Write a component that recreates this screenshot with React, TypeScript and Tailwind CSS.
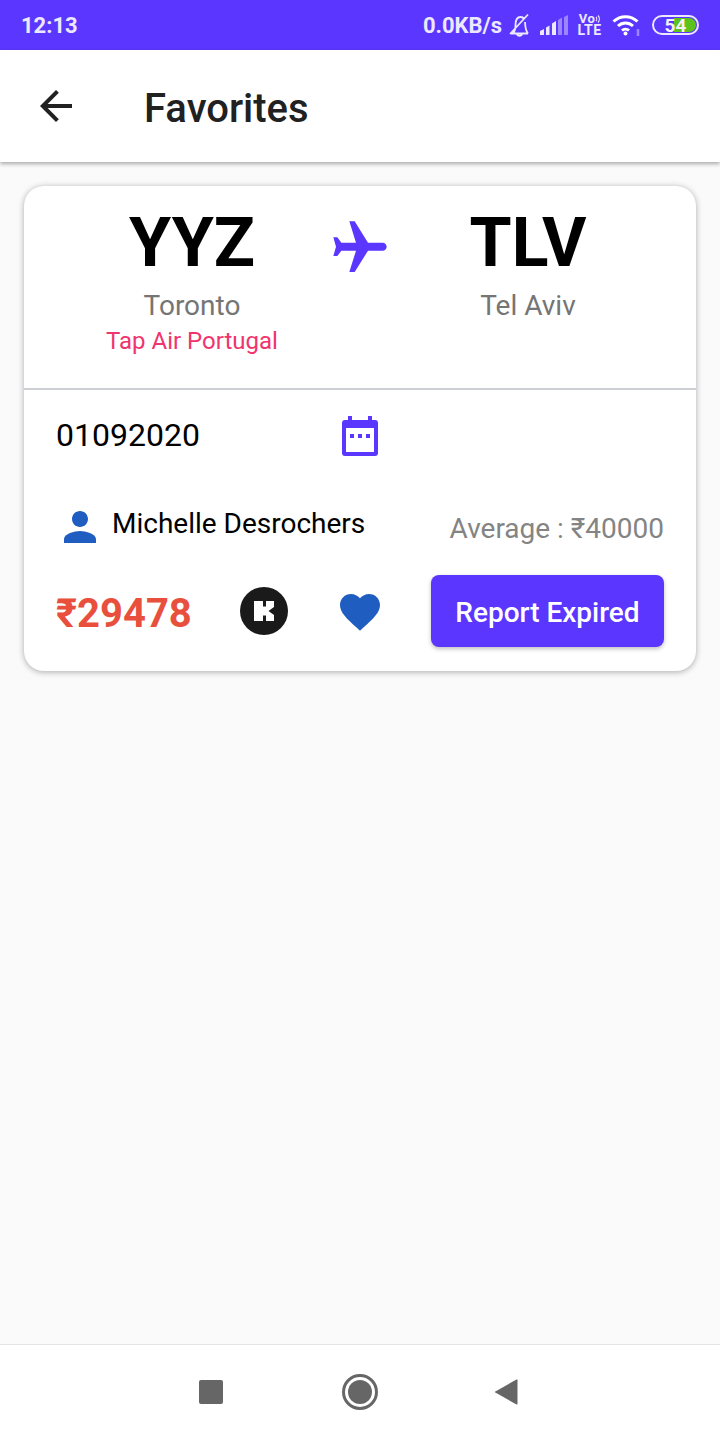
const purple = "#5b36ff";

function StatusBar() {
  return (
    <div className="h-[50px] shrink-0 bg-[#5b36ff] flex items-center pl-[21px] text-[#ece8ff]">
      <span className="text-[22px] font-bold leading-none mt-[2px]">12:13</span>
      <div className="ml-auto flex items-center h-full">
        <span className="text-[22px] font-bold leading-none mt-[2px]">0.0KB/s</span>
        <svg width="24" height="24" viewBox="0 0 24 24" fill="none" stroke="#ece8ff" strokeWidth="1.800" className="ml-[5px]">
          <path d="M4 20.500h17M6 20.500c2.500-2.500 2.500-5 2.500-8.500 0-4.500 1.500-8 5-8 1.800 0 3 .8 3.700 2M18 9c.3 4 .2 8 3 11.500M10 20.500c0 3 5 3 5 0M3 21 21 1.500" />
        </svg>
        <svg width="28" height="20" viewBox="0 0 28 20" className="ml-[9px]">
          <polygon points="0,16 4,14 4,20 0,20" fill="#ece8ff" />
          <polygon points="6,12.500 9.500,10.500 9.500,20 6,20" fill="#ece8ff" />
          <polygon points="12,8.500 16,6 16,20 12,20" fill="#ece8ff" />
          <polygon points="18,5 22,2.500 22,20 18,20" fill="#9c85ff" />
          <polygon points="24,2 28,0 28,20 24,20" fill="#9c85ff" />
        </svg>
        <div className="ml-[10px] w-[23px] flex flex-col items-center font-bold text-[#ece8ff]">
          <div className="flex items-center h-[11px]">
            <span className="text-[13px] leading-none tracking-[0.5px]">Vo</span>
            <svg width="5" height="10" viewBox="0 0 5 10" fill="none" stroke="#ece8ff" strokeWidth="1.200">
              <path d="M1 3c1 1 1 3 0 4M3 1.500c1.800 2 1.800 5 0 7" />
            </svg>
          </div>
          <span className="text-[14px] leading-[13px] tracking-[0.5px]">LTE</span>
        </div>
        <svg width="29" height="22" viewBox="0 0 29 22" fill="none" stroke="#ffffff" strokeWidth="3" className="ml-[11px]">
          <path d="M1.500 7.500c7-6.500 17-6.500 24 0M6 12c4.500-4 10.500-4 15 0M10 16.500c2-1.800 5-1.800 7 0" />
          <circle cx="13.500" cy="19.500" r="2" fill="#ffffff" stroke="none" />
          <path d="M26 15v7" stroke="#9c85ff" strokeWidth="2.500" />
        </svg>
        <div className="relative ml-[11px] mr-[21px] w-[47px] h-[20px] rounded-[10px] border-2 border-[#ece8ff] flex items-center justify-center">
          <div className="absolute right-[1px] top-[1px] bottom-[1px] w-[22px] rounded-r-[8px] bg-[#5cc31c]" />
          <span className="relative text-[19px] font-bold leading-none text-[#f4f1ff]">54</span>
        </div>
      </div>
    </div>
  );
}

function AppBar() {
  return (
    <div className="relative z-10 h-[112px] shrink-0 bg-white flex items-center shadow-[0_2px_4px_rgba(0,0,0,0.32)]">
      <svg width="48" height="48" viewBox="0 0 24 24" fill="#212121" className="ml-[32px] -mt-[1px]">
        <path d="M20 11H7.830l5.590-5.590L12 4l-8 8 8 8 1.410-1.410L7.830 13H20v-2z" />
      </svg>
      <span className="ml-[64px] mt-[6px] text-[40px] font-medium text-[#212121] leading-none">Favorites</span>
    </div>
  );
}

function Card() {
  return (
    <div className="mx-[24px] mt-[24px] h-[485px] bg-white rounded-[20px] shadow-[0_1px_6px_rgba(0,0,0,0.32)] flex flex-col">
      <div className="h-[204px] shrink-0 border-b-2 border-[#ccd0d4] grid grid-cols-[288px_96px_288px]">
        <div className="pl-[48px] flex flex-col items-center pt-[17px]">
          <span className="text-[68px] font-bold leading-[80px] text-black">YYZ</span>
          <span className="text-[28px] leading-[32px] mt-[7px] text-[#757575]">Toronto</span>
          <span className="text-[24px] leading-[28px] mt-[5px] text-[#f0346e]">Tap Air Portugal</span>
        </div>
        <div className="flex justify-center pt-[30px]">
          <svg width="64" height="64" viewBox="0 0 24 24" fill={purple} className="rotate-90">
            <path d="M21 16v-2l-8-5V3.500c0-.830-.670-1.500-1.500-1.500S10 2.670 10 3.500V9l-8 5v2l8-2.500V19l-2 1.500V22l3.500-1 3.500 1v-1.500L13 19v-5.500l8 2.500z" />
          </svg>
        </div>
        <div className="pr-[48px] flex flex-col items-center pt-[17px]">
          <span className="text-[68px] font-bold leading-[80px] text-black">TLV</span>
          <span className="text-[28px] leading-[32px] mt-[7px] text-[#757575]">Tel Aviv</span>
        </div>
      </div>

      <div className="h-[102px] shrink-0 flex items-start pl-[32px]">
        <span className="w-[286px] mt-[29px] text-[32px] leading-none text-black">01092020</span>
        <svg width="36" height="40" viewBox="0 0 36 40" fill={purple} fillRule="evenodd" className="mt-[26px]">
          <path d="M6 0h4v4h16V0h4v4h3a3 3 0 0 1 3 3v30a3 3 0 0 1-3 3H3a3 3 0 0 1-3-3V7a3 3 0 0 1 3-3h3zM4 12v24h28V12z" />
          <rect x="8" y="18" width="4" height="4" />
          <rect x="16" y="18" width="4" height="4" />
          <rect x="24" y="18" width="4" height="4" />
        </svg>
      </div>

      <div className="h-[83px] shrink-0 flex items-start pl-[32px] pr-[32px]">
        <svg width="48" height="48" viewBox="0 0 24 24" fill="#1f5dc0" className="mt-[11px]">
          <path d="M12 12c2.210 0 4-1.790 4-4s-1.790-4-4-4-4 1.790-4 4 1.790 4 4 4zm0 2c-2.670 0-8 1.340-8 4v2h16v-2c0-2.660-5.330-4-8-4z" />
        </svg>
        <span className="ml-[8px] mt-[18px] text-[28px] leading-none text-black">Michelle Desrochers</span>
        <span className="ml-auto mt-[23px] text-[28px] leading-none text-[#848484]">Average : ₹40000</span>
      </div>

      <div className="flex items-start pl-[32px]">
        <span className="w-[160px] mt-[15px] text-[40px] font-bold leading-[48px] text-[#e94f3d]">₹29478</span>
        <div className="mt-[12px] w-[48px] h-[48px] rounded-full bg-[#1a1a1a] ml-[24px] flex items-center justify-center">
          <svg width="20" height="20" viewBox="0 0 20 20" fill="#ffffff">
            <path d="M0 0H9V5.500H12V0H20V6L14.500 10L20 14V20H12V14.500H9V20H0Z" />
          </svg>
        </div>
        <svg width="48" height="48" viewBox="0 0 24 24" fill="#1f5dc0" className="ml-[48px] mt-[13px]">
          <path d="M12 21.350l-1.450-1.320C5.400 15.360 2 12.280 2 8.500 2 5.420 4.420 3 7.500 3c1.740 0 3.410.810 4.500 2.090C13.090 3.810 14.760 3 16.500 3 19.580 3 22 5.420 22 8.500c0 3.780-3.400 6.860-8.550 11.540L12 21.350z" />
        </svg>
        <button className="ml-[47px] w-[233px] h-[72px] pt-[4px] rounded-[8px] bg-[#5b36ff] text-white text-[28px] font-medium leading-none shadow-[0_2px_4px_rgba(0,0,0,0.25)]">
          Report Expired
        </button>
      </div>
    </div>
  );
}

function NavBar() {
  return (
    <div className="h-[96px] shrink-0 bg-white border-t border-[#e5e5e5] flex items-center justify-center -mt-[1px]">
      <div className="w-[24px] h-[24px] bg-[#666666] rounded-[2px] mb-[1px] -ml-[4px]" />
      <div className="ml-[119px] w-[36px] h-[36px] rounded-full border-[3px] border-[#666666] flex items-center justify-center mb-[1px]">
        <div className="w-[24px] h-[24px] rounded-full bg-[#666666]" />
      </div>
      <svg width="24" height="28" viewBox="0 0 24 28" fill="#666666" className="ml-[116px] mb-[1px]">
        <path d="M0.500 14 22.500 1.500q1-.3 1 .7v23.600q0 1-1 .7z" />
      </svg>
    </div>
  );
}

export default function App() {
  return (
    <div className="w-[720px] h-[1440px] overflow-hidden bg-[#fafafa] flex flex-col font-['Roboto',sans-serif]">
      <StatusBar />
      <AppBar />
      <Card />
      <div className="flex-1" />
      <NavBar />
    </div>
  );
}
